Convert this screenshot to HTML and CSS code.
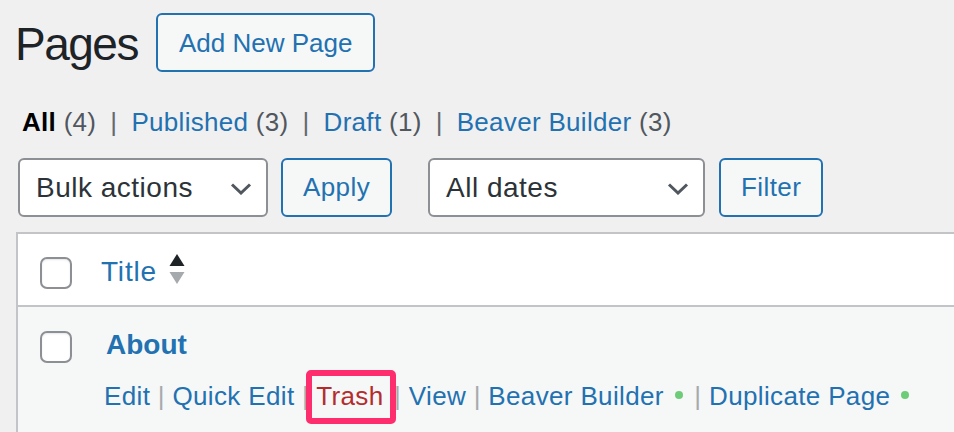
FILE: index.html
```html
<!DOCTYPE html>
<html lang="en">
<head>
<meta charset="utf-8">
<title>Pages</title>
<link rel="stylesheet" href="styles.css">
</head>
<body>
<div class="wrap">
  <div class="heading">
    <h1 class="page-title">Pages</h1>
    <a class="title-action" href="#">Add New Page</a>
  </div>

  <ul class="subsubsub">
    <li><a class="current" href="#">All <span class="count">(4)</span></a><span class="sep">|</span></li>
    <li><a href="#">Published <span class="count">(3)</span></a><span class="sep">|</span></li>
    <li><a href="#">Draft <span class="count">(1)</span></a><span class="sep">|</span></li>
    <li><a href="#">Beaver Builder <span class="count">(3)</span></a></li>
  </ul>

  <div class="tablenav">
    <div class="select select-bulk">
      <span class="select-label">Bulk actions</span>
      <svg class="chevron" width="22" height="12" viewBox="0 0 22 12"><path d="M2 1.5 L11 10 L20 1.5" fill="none" stroke="#50575e" stroke-width="3"/></svg>
    </div>
    <button class="btn btn-apply" type="button">Apply</button>
    <div class="select select-dates">
      <span class="select-label">All dates</span>
      <svg class="chevron" width="22" height="12" viewBox="0 0 22 12"><path d="M2 1.5 L11 10 L20 1.5" fill="none" stroke="#50575e" stroke-width="3"/></svg>
    </div>
    <button class="btn btn-filter" type="button">Filter</button>
  </div>

  <div class="list-table">
    <div class="thead">
      <span class="checkbox cb-head"></span>
      <div class="col-title">
        <a class="sort-link" href="#">Title</a><svg class="sort-icon" width="16" height="40" viewBox="0 0 16 40"><polygon points="0.5,14 8,2 15.5,14" fill="#1d2327"/><polygon points="0.5,20 15.5,20 8,32" fill="#a7aaad"/></svg>
      </div>
    </div>
    <div class="row">
      <span class="checkbox cb-row"></span>
      <div class="col-title row-col">
        <a class="row-title" href="#">About</a>
        <div class="row-actions"><a href="#">Edit</a> <span class="sep">|</span> <a href="#">Quick Edit</a> <span class="sep">|</span> <a class="trash" href="#">Trash</a> <span class="sep">|</span> <a href="#">View</a> <span class="sep">|</span> <a href="#">Beaver Builder</a><span class="dot"></span> <span class="sep">|</span> <a href="#">Duplicate Page</a><span class="dot"></span></div>
      </div>
    </div>
  </div>
</div>
</body>
</html>
```

FILE: styles.css
```css
html, body {
  margin: 0;
  padding: 0;
}

body {
  width: 954px;
  height: 432px;
  overflow: hidden;
  background: #f0f0f1;
  font-family: "Liberation Sans", Arial, sans-serif;
  color: #1d2327;
}

a {
  color: #2271b1;
  text-decoration: none;
}

.wrap {
  padding-left: 16px;
}

/* Heading */
.heading {
  display: flex;
  align-items: center;
  height: 59px;
  padding-top: 13px;
}

.page-title {
  margin: 0 0 0 -1px;
  font-size: 46px;
  font-weight: 400;
  line-height: 59px;
  letter-spacing: -1.5px;
  color: #1d2327;
  padding-top: 3px;
}

.title-action {
  box-sizing: border-box;
  height: 59px;
  margin-left: 18px;
  padding: 0 21px;
  border: 2px solid #2271b1;
  border-radius: 6px;
  background: #f6f7f7;
  font-size: 26px;
  line-height: 56px;
  color: #2271b1;
}

/* Status filters */
.subsubsub {
  display: flex;
  list-style: none;
  margin: 30px 0 0 6px;
  padding: 0;
  font-size: 26px;
  line-height: 40px;
  letter-spacing: 0.3px;
  color: #646970;
}

.subsubsub li {
  display: flex;
  white-space: pre;
}

.subsubsub .current {
  color: #000;
  font-weight: 700;
}

.subsubsub .count {
  color: #50575e;
  font-weight: 400;
}

.subsubsub .sep {
  margin: 0 14px;
  color: #646970;
}

/* Table nav */
.tablenav {
  display: flex;
  align-items: center;
  height: 59px;
  margin: 16px 0 0 2px;
}

.select {
  box-sizing: border-box;
  height: 59px;
  display: flex;
  align-items: center;
  justify-content: space-between;
  padding: 0 14px 0 16px;
  border: 2px solid #8c8f94;
  border-radius: 6px;
  background: #fff;
  font-size: 28px;
  letter-spacing: 0.5px;
  color: #2c3338;
}

.select-bulk {
  width: 250px;
}

.select-dates {
  width: 277px;
  margin-left: 36px;
}

.chevron {
  display: block;
  flex: none;
  margin-top: 2px;
}

.btn {
  box-sizing: border-box;
  height: 59px;
  padding: 0 20px;
  border: 2px solid #2271b1;
  border-radius: 6px;
  background: #f6f7f7;
  font-family: inherit;
  font-size: 26px;
  letter-spacing: 0.4px;
  color: #2271b1;
}

.btn-apply {
  margin-left: 13px;
}

.btn-filter {
  margin-left: 14px;
}

/* List table */
.list-table {
  width: 1000px;
  margin-top: 15px;
  border-top: 2px solid #c3c4c7;
  border-left: 2px solid #c3c4c7;
  background: #fff;
}

.thead {
  display: flex;
  align-items: flex-start;
  height: 71px;
  border-bottom: 2px solid #c3c4c7;
  background: #fff;
}

.checkbox {
  box-sizing: border-box;
  flex: none;
  width: 32px;
  height: 32px;
  border: 2px solid #8c8f94;
  border-radius: 7px;
  background: #fff;
  box-shadow: inset 0 1px 2px rgba(0, 0, 0, 0.1);
}

.cb-head {
  margin: 23px 0 0 22px;
}

.col-title {
  display: flex;
  margin: 18px 0 0 29px;
  font-size: 28px;
  line-height: 40px;
}

.sort-link {
  letter-spacing: 0.8px;
}

.sort-icon {
  display: block;
  margin-left: 12px;
}

.row {
  display: flex;
  align-items: flex-start;
  height: 140px;
  background: #f6f7f7;
}

.cb-row {
  margin: 24px 0 0 22px;
}

.row-col {
  display: block;
  margin-left: 34px;
}

.row-title {
  display: block;
  font-size: 28px;
  font-weight: 700;
  line-height: 40px;
}

.row-actions {
  margin: 12px 0 0 -2px;
  font-size: 26px;
  line-height: 39px;
  letter-spacing: 0.35px;
  color: #a7aaad;
  white-space: nowrap;
}

.row-actions .trash {
  position: relative;
  padding-right: 3px;
  color: #b32d2e;
}

.row-actions .trash::after {
  content: "";
  position: absolute;
  top: -11.5px;
  bottom: -12.5px;
  left: -10px;
  right: -9px;
  border: 6px solid #fe2e6e;
  border-radius: 5px;
}

.dot {
  display: inline-block;
  width: 8px;
  height: 8px;
  margin: 0 4px 0 11px;
  border-radius: 50%;
  background: #6ecb77;
  vertical-align: 6px;
}
```
